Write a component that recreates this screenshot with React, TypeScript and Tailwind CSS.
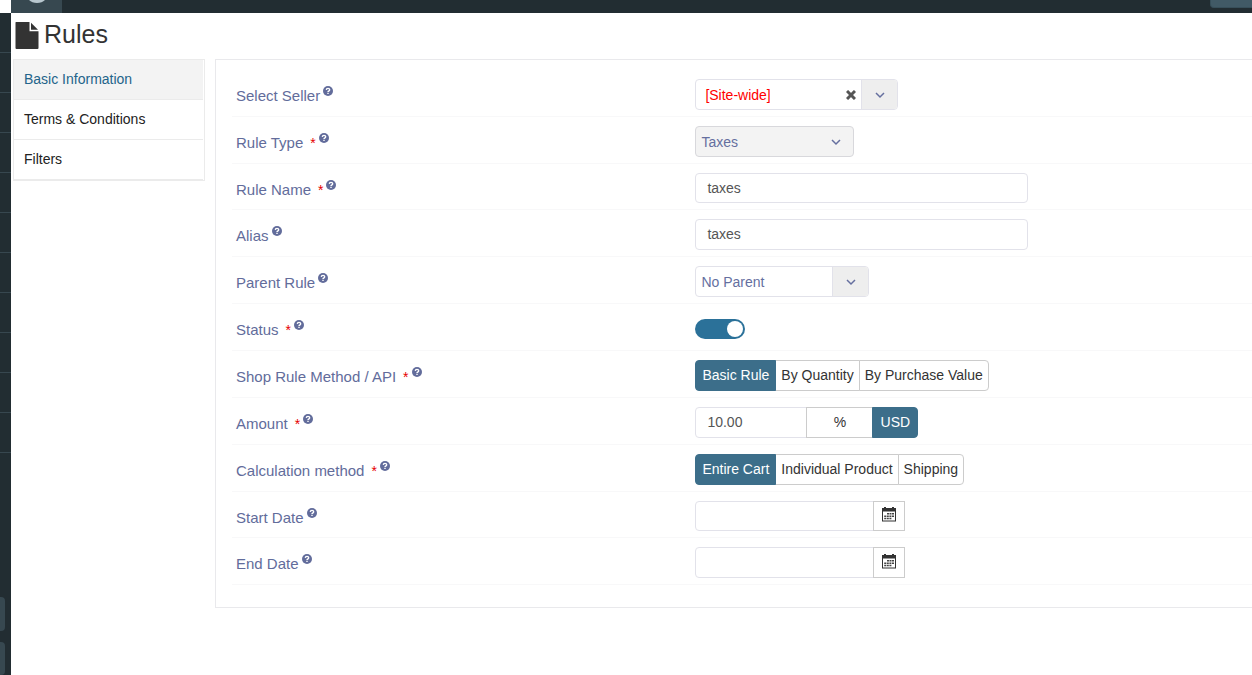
import { useState, type ReactNode } from "react";

const CONTROL_BORDER = "border border-[#e2e2ea]";

function Chevron() {
  return (
    <svg className="size-[10px]" viewBox="0 0 10 10" fill="none" stroke="#656f9f" strokeWidth="1.5" aria-hidden="true">
      <path d="M1 3l4 4 4-4" />
    </svg>
  );
}

function HelpIcon() {
  return (
    <svg className="ml-[3px] size-[10px]" viewBox="0 0 10 10" aria-hidden="true">
      <circle cx="5" cy="5" r="5" fill="#626c9b" />
      <path d="M3.300 3.900Q3.400 2.400 5 2.400T6.700 3.800Q6.700 4.600 5.800 5Q5 5.300 5 6" fill="none" stroke="#fff" strokeWidth="1.400" />
      <path d="M4.300 6.700h1.400v1.300H4.300Z" fill="#fff" />
    </svg>
  );
}

function FileIcon() {
  return (
    <svg className="h-[27px] w-[24px]" viewBox="0 0 24 27" fill="#333" aria-hidden="true">
      <path d="M1 0H14.5V9.300H23.5V26Q23.500 27 22.500 27H1.500Q.5 27 .5 26V.5Q.5 0 1 0Z" />
      <path d="M16 .8L23 7.800H16Z" />
    </svg>
  );
}

function CalendarIcon() {
  return (
    <svg className="h-[15px] w-[14px]" viewBox="0 0 14 15" aria-hidden="true">
      <path fill="#333" d="M0 1h2V0h2v1h6V0h2v1h2v13.500H0ZM1 4.500v9h12v-9Z" fillRule="evenodd" />
      <path
        fill="#444"
        d="M5 6h2v1.500H5ZM7.500 6h2v1.500h-2ZM10 6h2v1.500h-2ZM2.200 8.400h2v1.500h-2ZM4.800 8.400h2v1.500h-2ZM7.400 8.400h2v1.500h-2ZM10 8.400h2v1.500h-2ZM2.200 10.800h2v1.500h-2ZM4.800 10.800h2v1.500h-2ZM7.400 10.800h2v1.500h-2Z"
      />
    </svg>
  );
}

function Row({ label, htmlFor, required, children }: { label: string; htmlFor: string; required?: boolean; children: ReactNode }) {
  return (
    <div className="flex items-start border-b border-[#f8f8f9] px-1 pt-[9px] pb-[6px]">
      <label htmlFor={htmlFor} id={`${htmlFor}-label`} className="flex w-[45%] items-start pt-[7px] text-[15px] leading-5 text-[#626c9b]">
        {label}
        {required && <span className="ml-[7px] text-sm leading-5 text-[#e60000]">*</span>}
        <HelpIcon />
      </label>
      <div className="flex flex-1 pl-1">{children}</div>
    </div>
  );
}

function Segments({ id, options, initial }: { id: string; options: string[]; initial: string }) {
  const [value, setValue] = useState(initial);
  return (
    <div id={id} role="group" aria-labelledby={`${id}-label`} className="flex h-[31px] text-sm">
      {options.map((o) => (
        <button
          key={o}
          type="button"
          aria-pressed={o === value}
          onClick={() => setValue(o)}
          className={
            "-ml-px border px-[5px] pb-px first:ml-0 first:rounded-l first:px-[6px] last:rounded-r " +
            (o === value ? "z-10 border-[#3c6e8a] bg-[#3c6e8a] text-white" : "border-[#ccc] bg-white text-[#333]")
          }
        >
          {o}
        </button>
      ))}
    </div>
  );
}

function DateField({ id, height }: { id: string; height: string }) {
  return (
    <div className={"flex " + height}>
      <input id={id} type="text" className={"w-[179px] rounded-l bg-white px-3 text-sm " + CONTROL_BORDER} />
      <button type="button" aria-label="Open calendar" className="-ml-px flex w-8 items-center justify-center border border-[#ccc] bg-white pb-[3px]">
        <CalendarIcon />
      </button>
    </div>
  );
}

const NAV = ["Basic Information", "Terms & Conditions", "Filters"];
const MENU_LINES = Array.from({ length: 11 }, (_, i) => i);

export default function App() {
  const [status, setStatus] = useState(true);
  const [unit, setUnit] = useState("USD");

  return (
    <div className="flex min-h-screen flex-col bg-white font-['Liberation_Sans',Arial,sans-serif]">
      <header className="flex h-[13px] overflow-hidden bg-[#222d32]">
        <div className="w-[11px] bg-white" />
        <div className="flex w-[51px] items-start justify-center bg-[#374850]">
          <svg className="h-[3px] w-4" viewBox="0 0 16 3" aria-hidden="true">
            <path d="M0 0H16Q13 3 8 3T0 0Z" fill="#b8c7ce" />
          </svg>
        </div>
        <div className="ml-auto h-2 w-[42px] rounded-bl-sm border-b border-l border-[#374f5a] bg-[#415a66]" />
      </header>

      <div className="flex flex-1">
        <aside className="flex w-[11px] flex-col justify-between bg-[#222d32]">
          <div>
            {MENU_LINES.map((i) => (
              <div key={i} className="h-10 border-b border-[#37474f]" />
            ))}
          </div>
          <div className="flex flex-col gap-[11px]">
            <div className="h-[34px] w-[5px] rounded-r bg-[#374850]" />
            <div className="h-[33px] w-[5px] rounded-r bg-[#374850]" />
          </div>
        </aside>

        <main className="min-w-0 flex-1 pl-[2px]">
          <h1 className="flex h-[46px] items-center gap-[5px] pb-[2px] pl-[2px] text-[25px] text-[#333]">
            <FileIcon />
            Rules
          </h1>

          <div className="flex items-start">
            <nav className="w-[192px] shrink-0 border border-[#ebebeb] pr-px">
              {NAV.map((item, i) => (
                <a
                  key={item}
                  href="#"
                  className={
                    "block h-10 border-b border-[#ebebeb] pl-[10px] text-sm leading-[39px] " +
                    (i === 0 ? "bg-[#f3f3f3] text-[#23648a]" : "text-[#222]")
                  }
                >
                  {item}
                </a>
              ))}
            </nav>

            <form className="ml-[10px] min-w-0 flex-1 border-y border-l border-[#e9e9ec] pt-[10px] pb-[22px] pl-4">
              <Row label="Select Seller" htmlFor="seller">
                <div className={"flex h-[31px] overflow-hidden rounded bg-white " + CONTROL_BORDER}>
                  <input id="seller" defaultValue="[Site-wide]" className="w-[145px] pl-[9px] text-sm text-[#f00]" />
                  <button type="button" aria-label="Clear seller" className="w-5 pl-[5px]">
                    <svg className="size-[10px]" viewBox="0 0 10 10" stroke="#555" strokeWidth="3" aria-hidden="true">
                      <path d="M1 1l8 8M9 1L1 9" />
                    </svg>
                  </button>
                  <button type="button" aria-label="Show sellers" className="flex w-[36px] items-center justify-center border-l border-[#e2e2ea] bg-[#eee]">
                    <Chevron />
                  </button>
                </div>
              </Row>

              <Row label="Rule Type" htmlFor="type" required>
                <div className="relative flex h-[31px] w-[159px]">
                  <select id="type" className="w-full appearance-none rounded border border-[#d8d8dc] bg-[#f3f3f3] pl-[5px] text-sm text-[#656f9f]">
                    <option>Taxes</option>
                  </select>
                  <span className="pointer-events-none absolute inset-y-0 right-[13px] flex items-center">
                    <Chevron />
                  </span>
                </div>
              </Row>

              <Row label="Rule Name" htmlFor="name" required>
                <input id="name" defaultValue="taxes" className={"h-[30px] w-[333px] rounded bg-white px-[11px] pb-px text-sm text-[#555] " + CONTROL_BORDER} />
              </Row>

              <Row label="Alias" htmlFor="alias">
                <input id="alias" defaultValue="taxes" className={"h-[31px] w-[333px] rounded bg-white px-[11px] pb-px text-sm text-[#555] " + CONTROL_BORDER} />
              </Row>

              <Row label="Parent Rule" htmlFor="parent">
                <div className="relative flex h-[31px] w-[174px]">
                  <select id="parent" className={"w-full appearance-none rounded bg-white pl-[5px] text-sm text-[#656f9f] " + CONTROL_BORDER}>
                    <option>No Parent</option>
                  </select>
                  <span className="pointer-events-none absolute inset-y-px right-px flex w-[36px] items-center justify-center rounded-r-[3px] border-l border-[#e2e2ea] bg-[#eee]">
                    <Chevron />
                  </span>
                </div>
              </Row>

              <Row label="Status" htmlFor="status" required>
                <div className="flex h-[31px] items-center">
                  <input
                    id="status"
                    type="checkbox"
                    role="switch"
                    checked={status}
                    onChange={() => setStatus(!status)}
                    className="h-5 w-[50px] appearance-none rounded-full bg-[#aaa] p-[2px] before:block before:size-4 before:rounded-full before:bg-white checked:bg-[#2b7199] checked:before:ml-auto"
                  />
                </div>
              </Row>

              <Row label="Shop Rule Method / API" htmlFor="method" required>
                <Segments id="method" options={["Basic Rule", "By Quantity", "By Purchase Value"]} initial="Basic Rule" />
              </Row>

              <Row label="Amount" htmlFor="amount" required>
                <div className="flex h-[31px] text-sm">
                  <input id="amount" defaultValue="10.00" className={"w-[112px] rounded-l bg-white px-[11px] pb-px text-[#555] " + CONTROL_BORDER} />
                  {["%", "USD"].map((u) => (
                    <button
                      key={u}
                      type="button"
                      aria-pressed={u === unit}
                      onClick={() => setUnit(u)}
                      className={
                        "-ml-px border pb-px first-of-type:w-[67px] last:w-[46px] last:rounded-r " +
                        (u === unit ? "z-10 border-[#3c6e8a] bg-[#3c6e8a] text-white" : "border-[#ccc] bg-white text-[#333]")
                      }
                    >
                      {u}
                    </button>
                  ))}
                </div>
              </Row>

              <Row label="Calculation method" htmlFor="calculation" required>
                <Segments id="calculation" options={["Entire Cart", "Individual Product", "Shipping"]} initial="Entire Cart" />
              </Row>

              <Row label="Start Date" htmlFor="start">
                <DateField id="start" height="h-[30px]" />
              </Row>

              <Row label="End Date" htmlFor="end">
                <DateField id="end" height="h-[31px]" />
              </Row>
            </form>
          </div>
        </main>
      </div>
    </div>
  );
}
